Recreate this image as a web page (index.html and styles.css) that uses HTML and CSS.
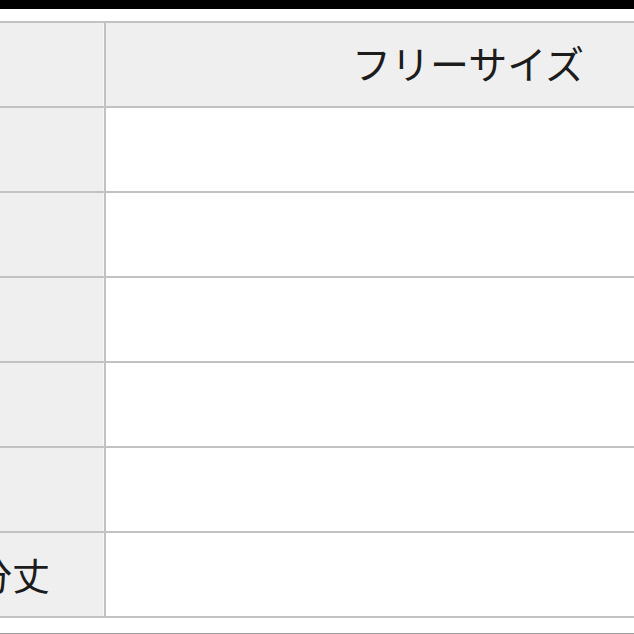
FILE: index.html
```html
<!DOCTYPE html>
<html lang="ja">
<head>
<meta charset="utf-8">
<title>サイズ表</title>
<link rel="stylesheet" href="styles.css">
</head>
<body>
<div class="topbar"></div>
<div class="table">
  <div class="row head">
    <div class="label"></div>
    <div class="value">フリーサイズ</div>
  </div>
  <div class="row"><div class="label"></div><div class="value"></div></div>
  <div class="row"><div class="label"></div><div class="value"></div></div>
  <div class="row"><div class="label"></div><div class="value"></div></div>
  <div class="row"><div class="label"></div><div class="value"></div></div>
  <div class="row"><div class="label"></div><div class="value"></div></div>
  <div class="row">
    <div class="label">七分丈</div>
    <div class="value"></div>
  </div>
</div>
<div class="footline"></div>
</body>
</html>
```

FILE: styles.css
```css
* { box-sizing: border-box; }
html, body {
  margin: 0;
  padding: 0;
  width: 634px;
  height: 634px;
  overflow: hidden;
  background: #fff;
  font-family: "Noto Sans CJK JP", "Noto Sans", sans-serif;
  color: #1c1c1c;
}
.topbar {
  height: 9px;
  background: #000;
}
.table {
  margin-top: 12px;
  width: 760px;
  border-top: 2px solid #c2c2c2;
}
.row {
  display: flex;
  height: 85px;
  border-bottom: 2px solid #c2c2c2;
}
.label {
  flex: 0 0 106px;
  width: 106px;
  background: #efefef;
  border-right: 2px solid #c2c2c2;
  box-shadow: inset -6px 0 0 -5px #f8f8f8;
  display: flex;
  justify-content: flex-end;
  align-items: center;
  padding-right: 54px;
  padding-bottom: 2px;
  font-size: 38px;
  line-height: 1;
  white-space: nowrap;
}
.value {
  flex: 1;
  background: #fff;
  display: flex;
  align-items: center;
  padding-left: 246px;
  padding-bottom: 5px;
  font-size: 39px;
  line-height: 1;
  white-space: nowrap;
}
.head .value {
  background: #efefef;
}
.footline {
  margin-top: 15px;
  height: 2px;
  background: #9c9c9c;
}
```
